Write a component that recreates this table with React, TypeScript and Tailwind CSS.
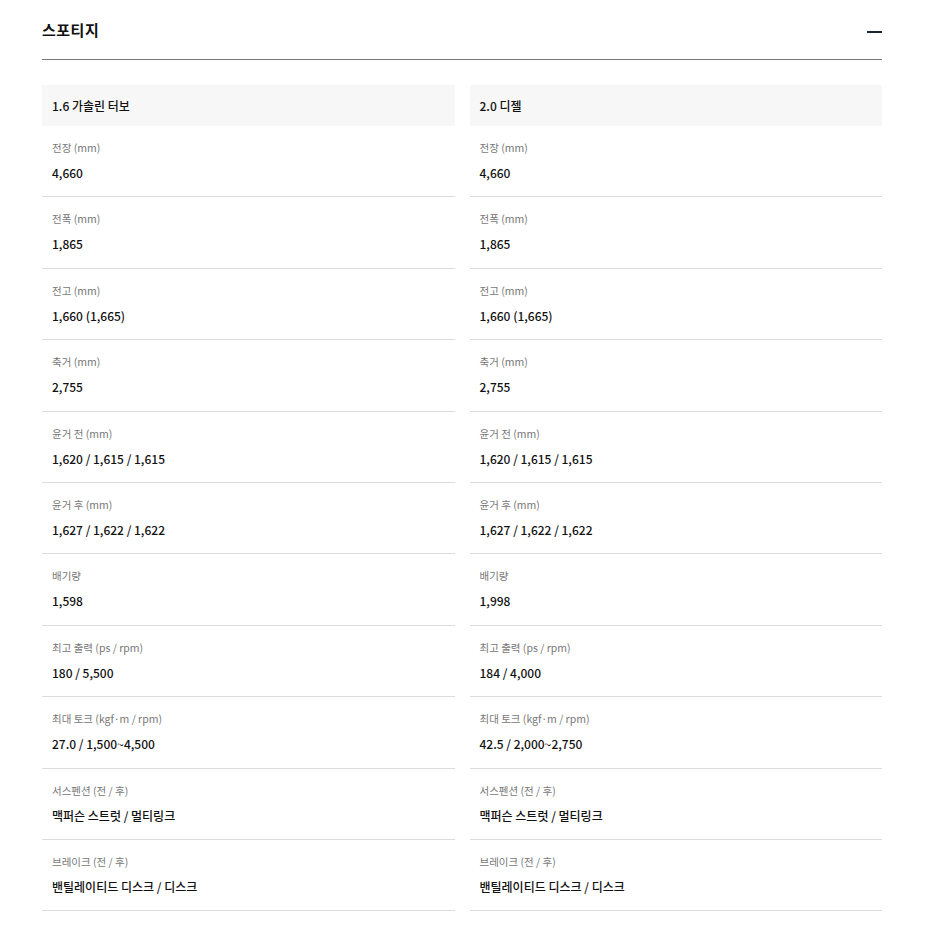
import React from 'react';

type Spec = { label: string; values: [string, string] };

const specs: Spec[] = [
    { label: '전장 (mm)', values: ['4,660', '4,660'] },
    { label: '전폭 (mm)', values: ['1,865', '1,865'] },
    { label: '전고 (mm)', values: ['1,660 (1,665)', '1,660 (1,665)'] },
    { label: '축거 (mm)', values: ['2,755', '2,755'] },
    { label: '윤거 전 (mm)', values: ['1,620 / 1,615 / 1,615', '1,620 / 1,615 / 1,615'] },
    { label: '윤거 후 (mm)', values: ['1,627 / 1,622 / 1,622', '1,627 / 1,622 / 1,622'] },
    { label: '배기량', values: ['1,598', '1,998'] },
    { label: '최고 출력 (ps / rpm)', values: ['180 / 5,500', '184 / 4,000'] },
    { label: '최대 토크 (kgf·m / rpm)', values: ['27.0 / 1,500~4,500', '42.5 / 2,000~2,750'] },
    { label: '서스펜션 (전 / 후)', values: ['맥퍼슨 스트럿 / 멀티링크', '맥퍼슨 스트럿 / 멀티링크'] },
    { label: '브레이크 (전 / 후)', values: ['밴틸레이티드 디스크 / 디스크', '밴틸레이티드 디스크 / 디스크'] },
];

const engines = ['1.6 가솔린 터보', '2.0 디젤'];

const SpecColumn: React.FC<{ title: string; index: 0 | 1 }> = ({ title, index }) => (
    <div className="flex flex-col">
        <div className="h-[41px] bg-[#f7f7f7] px-[10px] flex items-center text-[12px] font-medium text-[#111]">
            {title}
        </div>
        {specs.map((spec) => (
            <div key={spec.label} className="border-b border-[#dcdcdc] px-[10px] pt-[14px] pb-[14.4px]">
                <p className="text-[10.5px] leading-[16px] text-[#777]">{spec.label}</p>
                <p className="mt-[8px] text-[12px] leading-[18px] font-medium text-[#111]">{spec.values[index]}</p>
            </div>
        ))}
    </div>
);

export default function App() {
    return (
        <div className="min-h-screen bg-white font-['Noto_Sans_CJK_KR','Noto_Sans',sans-serif]">
            <div className="mx-[42px] w-[840px]">
                <div className="flex items-center justify-between h-[60px] border-b border-[#777] pt-[2px]">
                    <h2 className="text-[15px] font-bold text-[#111] tracking-[0.5px]">스포티지</h2>
                    <span className="block w-[15px] h-[2px] bg-[#1c2633] mt-[2px]" />
                </div>
                <div className="grid grid-cols-2 gap-x-[15px] mt-[25px]">
                    <SpecColumn title={engines[0]} index={0} />
                    <SpecColumn title={engines[1]} index={1} />
                </div>
            </div>
        </div>
    );
}
